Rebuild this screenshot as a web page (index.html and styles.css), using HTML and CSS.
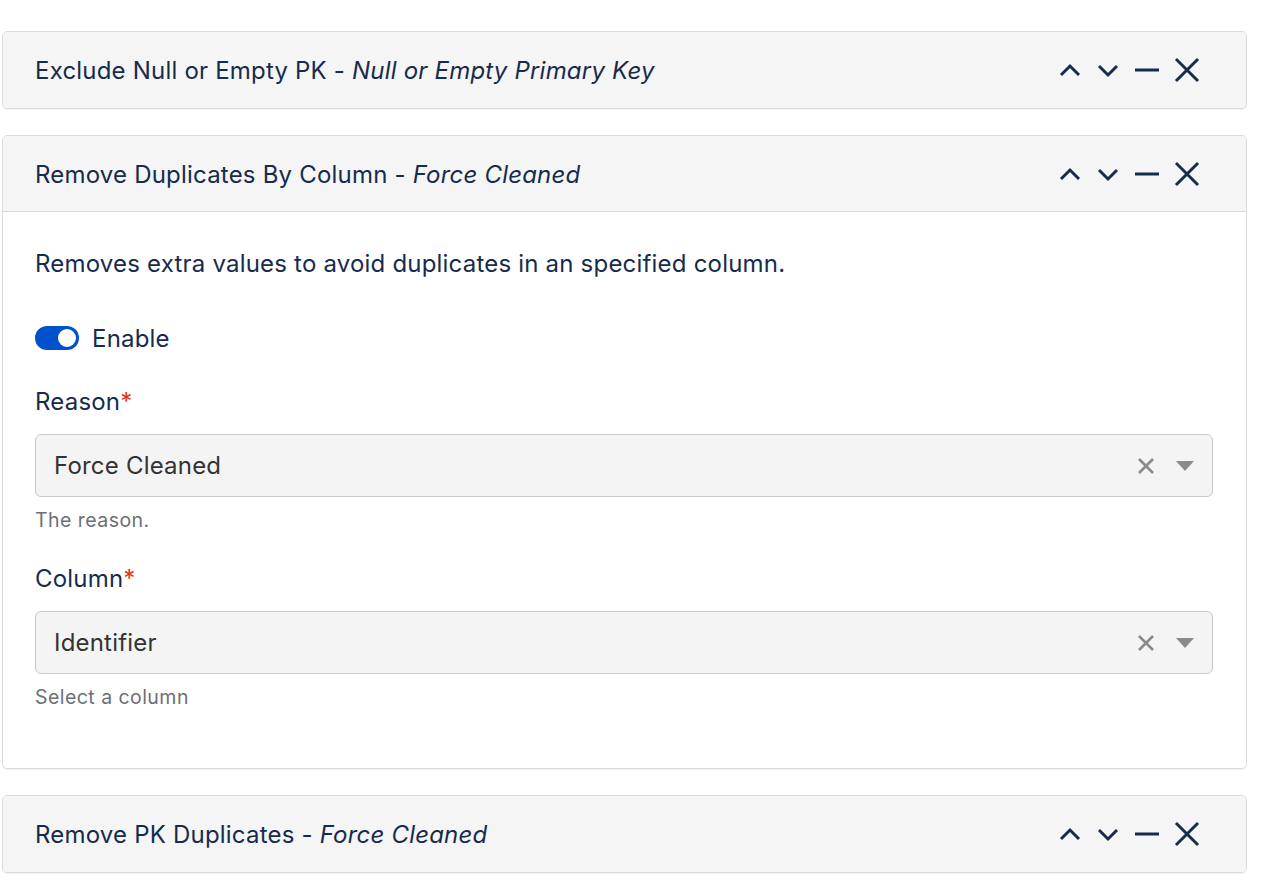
FILE: index.html
```html
<!DOCTYPE html>
<html>
<head>
<meta charset="utf-8">
<link rel="stylesheet" href="styles.css">
</head>
<body>
<div class="page">
  <div class="card">
    <div class="card-header">
      <div class="title">Exclude Null or Empty PK - <em>Null or Empty Primary Key</em></div>
      <div class="actions">
        <svg class="ic" width="24" height="24" viewBox="0 0 24 24"><path d="M3 17 L12 8 L21 17" /></svg>
        <svg class="ic" width="24" height="24" viewBox="0 0 24 24"><path d="M3 8 L12 17 L21 8" /></svg>
        <svg class="ic" width="26" height="24" viewBox="0 0 26 24"><path d="M1 12 H25" stroke-width="3.4" /></svg>
        <svg class="ic" width="26" height="26" viewBox="0 0 26 26"><path d="M2 2 L24 24 M24 2 L2 24" /></svg>
      </div>
    </div>
  </div>

  <div class="card">
    <div class="card-header">
      <div class="title">Remove Duplicates By Column - <em>Force Cleaned</em></div>
      <div class="actions">
        <svg class="ic" width="24" height="24" viewBox="0 0 24 24"><path d="M3 17 L12 8 L21 17" /></svg>
        <svg class="ic" width="24" height="24" viewBox="0 0 24 24"><path d="M3 8 L12 17 L21 8" /></svg>
        <svg class="ic" width="26" height="24" viewBox="0 0 26 24"><path d="M1 12 H25" stroke-width="3.4" /></svg>
        <svg class="ic" width="26" height="26" viewBox="0 0 26 26"><path d="M2 2 L24 24 M24 2 L2 24" /></svg>
      </div>
    </div>
    <div class="card-body">
      <p class="desc">Removes extra values to avoid duplicates in an specified column.</p>
      <label class="toggle-row">
        <span class="toggle"><span class="knob"></span></span>
        <span>Enable</span>
      </label>
      <div class="field">
        <div class="label">Reason<span class="req">*</span></div>
        <div class="select">
          <span class="value">Force Cleaned</span>
          <svg class="clear" width="18" height="18" viewBox="0 0 18 18"><path d="M2 2 L16 16 M16 2 L2 16" /></svg>
          <svg class="caret" width="18" height="10" viewBox="0 0 18 10"><path d="M0 0 H18 L9 10 Z" /></svg>
        </div>
        <div class="help">The reason.</div>
      </div>
      <div class="field">
        <div class="label">Column<span class="req">*</span></div>
        <div class="select">
          <span class="value">Identifier</span>
          <svg class="clear" width="18" height="18" viewBox="0 0 18 18"><path d="M2 2 L16 16 M16 2 L2 16" /></svg>
          <svg class="caret" width="18" height="10" viewBox="0 0 18 10"><path d="M0 0 H18 L9 10 Z" /></svg>
        </div>
        <div class="help">Select a column</div>
      </div>
    </div>
  </div>

  <div class="card">
    <div class="card-header">
      <div class="title">Remove PK Duplicates - <em>Force Cleaned</em></div>
      <div class="actions">
        <svg class="ic" width="24" height="24" viewBox="0 0 24 24"><path d="M3 17 L12 8 L21 17" /></svg>
        <svg class="ic" width="24" height="24" viewBox="0 0 24 24"><path d="M3 8 L12 17 L21 8" /></svg>
        <svg class="ic" width="26" height="24" viewBox="0 0 26 24"><path d="M1 12 H25" stroke-width="3.4" /></svg>
        <svg class="ic" width="26" height="26" viewBox="0 0 26 26"><path d="M2 2 L24 24 M24 2 L2 24" /></svg>
      </div>
    </div>
  </div>
</div>
</body>
</html>
```

FILE: styles.css
```css
* { box-sizing: border-box; }
html, body { margin: 0; padding: 0; background: #fff; }
body {
  font-family: Inter, "Helvetica Neue", Arial, sans-serif;
  color: #172b4d;
  font-size: 24px;
  letter-spacing: 0.2px;
}
.page {
  padding: 31px 0 0 2px;
  width: 1247px;
}
.card {
  border: 1px solid #dcdcdc;
  border-radius: 5px;
  margin-bottom: 26px;
  box-shadow: 0 1px 0 rgba(0,0,0,0.06);
  overflow: hidden;
}
.card-header {
  background: #f5f5f5;
  height: 76px;
  display: flex;
  align-items: center;
  justify-content: space-between;
  padding: 0 46px 0 32px;
}
.card-body {
  border-top: 1px solid #dcdcdc;
  margin-top: -1px;
  padding: 37px 32px 59px 32px;
}
.title { font-size: 24px; }
.title em { font-style: italic; }
.actions {
  display: flex;
  align-items: center;
  gap: 14px;
}
.ic path {
  fill: none;
  stroke: #172b4d;
  stroke-width: 3;
}
.desc {
  margin: 0;
  line-height: 30px;
}
.toggle-row {
  display: flex;
  align-items: center;
  gap: 13px;
  margin-top: 47px;
  height: 24px;
}
.toggle {
  width: 44px;
  height: 24px;
  border-radius: 12px;
  background: #0052cc;
  position: relative;
  display: inline-block;
}
.knob {
  position: absolute;
  width: 18px;
  height: 18px;
  border-radius: 50%;
  background: #fff;
  top: 3px;
  right: 3px;
}
.field { margin-top: 37px; }
.field + .field { margin-top: 32px; }
.label { line-height: 30px; }
.req { color: #de350b; }
.select {
  margin-top: 17px;
  height: 63px;
  width: 1178px;
  background: #f4f4f4;
  border: 1px solid #c9c9c9;
  border-radius: 6px;
  display: flex;
  align-items: center;
  padding: 0 18px 0 18px;
  color: #333;
}
.select .value { flex: 1; }
.clear path { stroke: #8a8a8a; stroke-width: 2.6; fill: none; }
.caret { margin-left: 21px; }
.caret path { fill: #8a8a8a; }
.help {
  margin-top: 11px;
  font-size: 19.5px;
  line-height: 24px;
  letter-spacing: 0.45px;
  color: #6b6f76;
}
```
